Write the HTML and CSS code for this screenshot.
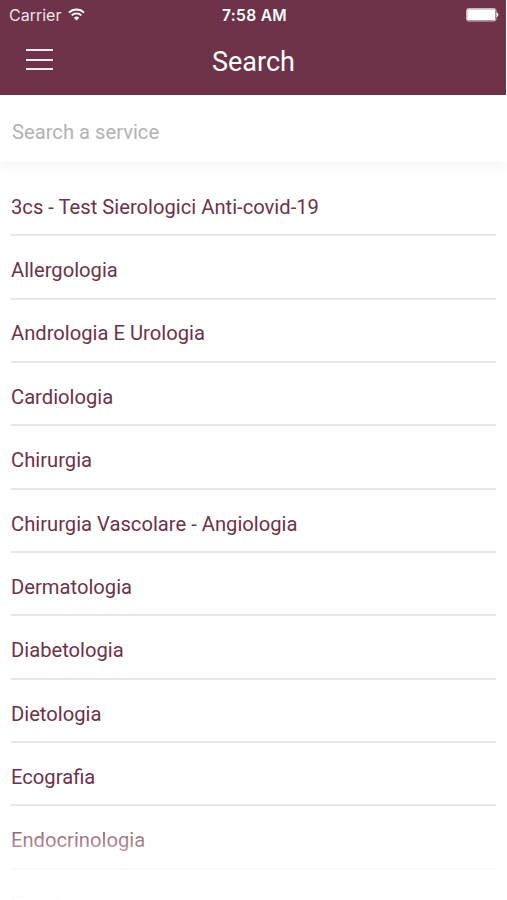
FILE: index.html
```
<!DOCTYPE html>
<html lang="it">
<head>
    <meta charset="UTF-8">
    <meta name="viewport" content="width=device-width, initial-scale=1.0">
    <title>Search</title>
    <link rel="stylesheet" href="styles.css">
</head>
<body>
    <div class="screen">
        <header class="header">
            <div class="status-bar">
                <div class="carrier">
                    <span>Carrier</span>
                    <svg class="wifi" width="17" height="13" viewBox="0 0 17 13">
                        <path d="M1 4.6a10.6 10.6 0 0 1 15 0M3.7 7.4a6.8 6.8 0 0 1 9.6 0" fill="none" stroke="#fff" stroke-width="1.9"/>
                        <path d="M8.5 12.6L5.9 9.9a3.7 3.7 0 0 1 5.2 0z" fill="#fff"/>
                    </svg>
                </div>
                <span class="time">7:58 AM</span>
                <svg class="battery" width="33" height="14" viewBox="0 0 33 14">
                    <rect x="0.5" y="0.5" width="29.5" height="12.5" rx="2" fill="none" stroke="#fff" stroke-opacity="0.65"/>
                    <rect x="1.2" y="1.2" width="28" height="11" rx="1" fill="#fff"/>
                    <path d="M30.5 4.2a2.6 2.6 0 0 1 0 5z" fill="#fff"/>
                </svg>
            </div>
            <nav class="nav-bar">
                <button type="button" class="menu-button" aria-label="Menu">
                    <span></span>
                    <span></span>
                    <span></span>
                </button>
                <h1>Search</h1>
            </nav>
        </header>

        <form class="search-form">
            <input type="text" placeholder="Search a service">
        </form>

        <ul class="service-list">
            <li>3cs - Test Sierologici Anti-covid-19</li>
            <li>Allergologia</li>
            <li>Andrologia E Urologia</li>
            <li>Cardiologia</li>
            <li>Chirurgia</li>
            <li>Chirurgia Vascolare - Angiologia</li>
            <li>Dermatologia</li>
            <li>Diabetologia</li>
            <li>Dietologia</li>
            <li>Ecografia</li>
            <li>Endocrinologia</li>
            <li>Fisiatria</li>
        </ul>
        <div class="fade"></div>
    </div>
</body>
</html>
```
FILE: styles.css
```
* {
    box-sizing: border-box;
}

body {
    margin: 0;
    background-color: #fff;
    font-family: Roboto, sans-serif;
}

.screen {
    position: relative;
    height: 900px;
    overflow: hidden;
}

.header {
    height: 95px;
    margin-right: 1px;
    background-color: #6e3249;
    color: #fff;
}

.status-bar {
    display: grid;
    grid-template-columns: 1fr auto 1fr;
    align-items: center;
    height: 30px;
    padding: 0 7px 0 10px;
    font-family: Inter, sans-serif;
    font-size: 16px;
}

.carrier {
    display: flex;
    align-items: center;
    gap: 7px;
    margin-left: -1px;
    color: #f0e4e9;
}

.wifi {
    margin-bottom: 2px;
}

.time {
    font-size: 15.6px;
    font-weight: 600;
    letter-spacing: 0.3px;
}

.battery {
    justify-self: end;
}

.nav-bar {
    display: grid;
    grid-template-columns: 1fr auto 1fr;
    align-items: center;
    height: 64px;
    padding: 0 25px 0 26px;
}

.menu-button {
    display: flex;
    flex-direction: column;
    gap: 7.5px;
    width: 27px;
    margin-bottom: 5px;
    padding: 0;
    border: none;
    background: none;
}

.menu-button span {
    height: 2px;
    background-color: #fbe9f0;
}

.nav-bar h1 {
    margin: 0;
    font-size: 27px;
    font-weight: 400;
}

.search-form {
    height: 67px;
    background-color: #fff;
    box-shadow: 0 4px 12px rgba(0, 0, 0, 0.05);
}

.search-form input {
    width: 100%;
    height: 100%;
    padding: 6px 12px 0;
    border: none;
    outline: none;
    background: none;
    font-family: inherit;
    font-size: 20.2px;
}

.search-form input::placeholder {
    color: #b2b2b2;
}

.service-list {
    margin: 0;
    padding: 11px 11px 0;
    list-style: none;
}

.service-list li {
    height: 63.35px;
    padding-top: 21.8px;
    border-bottom: 2px solid #e6e7e8;
    color: #6e3249;
    font-size: 20.2px;
    line-height: 24px;
}

/* fades the end of the list to white */
.fade {
    position: absolute;
    right: 0;
    bottom: 0;
    left: 0;
    height: 85px;
    background: linear-gradient(rgba(255, 255, 255, 0), rgba(255, 255, 255, 0.8) 65%, rgba(255, 255, 255, 0.98) 92%);
}
```
